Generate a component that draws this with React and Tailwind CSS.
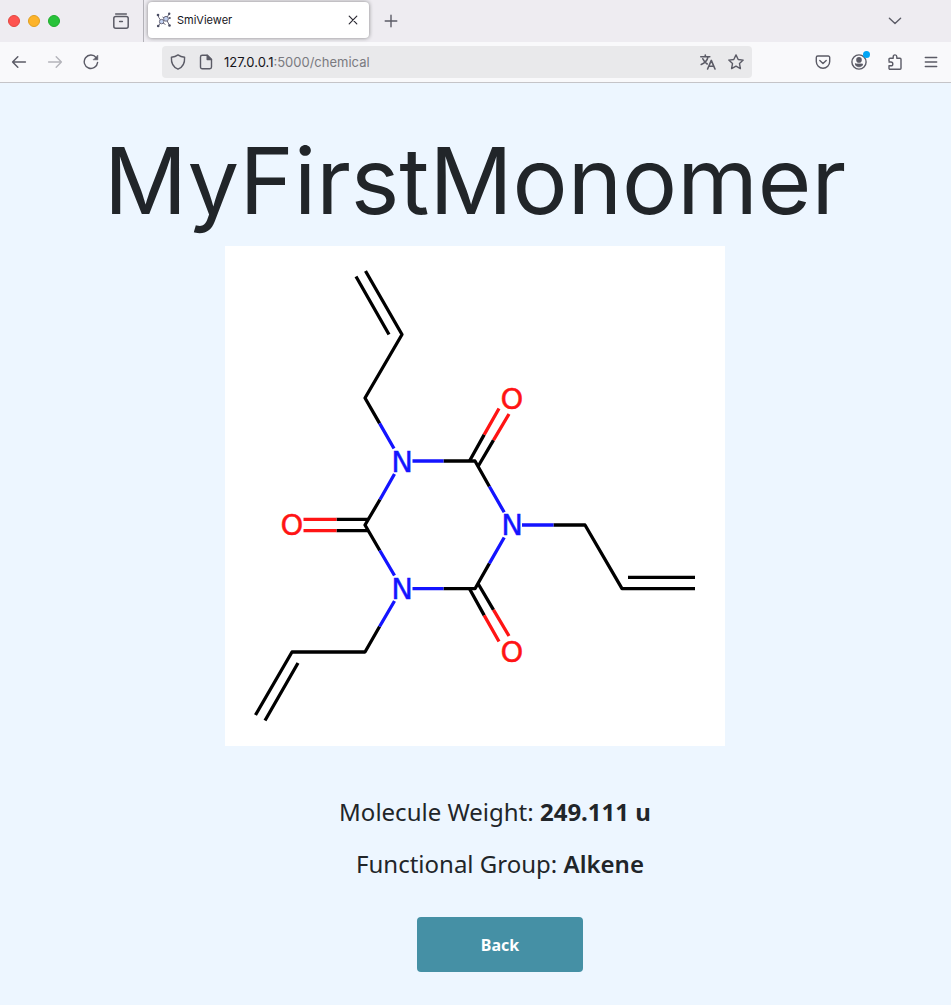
const icon = {
  fill: "none",
  stroke: "#5b5b66",
  strokeWidth: 1.4,
  strokeLinecap: "round",
  strokeLinejoin: "round",
};

function Icon({ children, className = "size-4", ...rest }) {
  return (
    <svg viewBox="0 0 16 16" className={`${className} shrink-0`} aria-hidden="true" {...icon} {...rest}>
      {children}
    </svg>
  );
}

function IconButton({ label, children, className = "" }) {
  return (
    <button type="button" aria-label={label} className={`flex size-4 shrink-0 items-center justify-center ${className}`}>
      {children}
    </button>
  );
}

function Favicon() {
  return (
    <svg viewBox="0 0 16 16" className="size-4 shrink-0" aria-hidden="true">
      <g stroke="#6b6a7c" strokeWidth="1" fill="none">
        <path d="M5.500 9.500 2.800 5.500 2 2.800M5.500 9.500 2.300 14M10.500 6.500 13 2M10.500 7.500 13.500 13.500M7 11 9.500 12.500M6.500 5 8.500 6" />
      </g>
      <g fill="#c3d3f3" stroke="#6b6a7c" strokeWidth="1">
        <circle cx="5.600" cy="9.600" r="2.200" />
        <circle cx="10" cy="6.800" r="2.400" />
      </g>
      <g fill="#4a4d63">
        <circle cx="2" cy="3" r="1.300" />
        <circle cx="13.200" cy="1.800" r="1.200" />
        <circle cx="2.200" cy="14" r="1.300" />
        <circle cx="13.500" cy="13.500" r="1.300" />
        <circle cx="13.800" cy="6" r="1" />
      </g>
    </svg>
  );
}

function TabStrip() {
  return (
    <div className="flex h-[42px] items-stretch bg-[#eeecf1]">
      <div className="flex w-36 shrink-0 items-center border-r border-[#b4b3b9] pl-2">
        <div className="flex gap-2">
          <button type="button" aria-label="Close window" className="size-3 rounded-full border border-[#e2463f] bg-[#fe5350]" />
          <button type="button" aria-label="Minimize window" className="size-3 rounded-full border border-[#e09f1f] bg-[#fdb32a]" />
          <button type="button" aria-label="Zoom window" className="size-3 rounded-full border border-[#1fac2d] bg-[#28c23a]" />
        </div>
        <IconButton label="Recent browsing" className="ml-[53px]">
          <Icon strokeWidth="1.5">
            <path d="M2.700 1h10.600" />
            <rect x=".8" y="3.600" width="14.400" height="11.600" rx="2" />
            <path d="M6.600 8.400h2.800" />
          </Icon>
        </IconButton>
      </div>
      <div className="mt-[2px] ml-1 flex h-9 w-[221px] items-center rounded-[4px] bg-white px-2 shadow-[0_0_4px_rgba(0,0,0,0.45)]">
        <Favicon />
        <span className="ml-[5px] flex-1 pt-px font-['Inter',sans-serif] text-[11px] text-[#15141a]">SmiViewer</span>
        <IconButton label="Close tab">
          <Icon stroke="#2b2a33" strokeWidth="1.200">
            <path d="m4.200 4.200 7.600 7.600M11.800 4.200l-7.600 7.600" />
          </Icon>
        </IconButton>
      </div>
      <div className="flex flex-1 items-center justify-between pr-12 pl-[14px]">
        <IconButton label="New tab">
          <Icon>
            <path d="M8 2.200v11.600M2.200 8h11.600" />
          </Icon>
        </IconButton>
        <IconButton label="List all tabs">
          <Icon>
            <path d="m2.400 5.200 5.600 5.300 5.600-5.300" />
          </Icon>
        </IconButton>
      </div>
    </div>
  );
}

function Toolbar() {
  return (
    <div className="flex h-[41px] items-center border-b border-[#c5c4c8] bg-[#f9f9fb] pr-3 pl-[11px]">
      <div className="flex gap-5">
        <IconButton label="Back">
          <Icon strokeWidth="1.500">
            <path d="M14.400 8H1.600M6.800 2.800 1.600 8l5.200 5.200" />
          </Icon>
        </IconButton>
        <IconButton label="Forward">
          <Icon stroke="#b4b4ba">
            <path d="M1.600 8h12.800M9.200 2.800 14.400 8l-5.200 5.200" />
          </Icon>
        </IconButton>
        <IconButton label="Reload">
          <Icon>
            <path d="M13.200 3.600A6.700 6.700 0 1 0 14.600 8.400" />
            <path d="M14.800 1.400v4.400h-4.400z" fill="#5b5b66" strokeWidth=".6" />
          </Icon>
        </IconButton>
      </div>
      <div className="ml-[63px] flex h-8 flex-1 items-center rounded-[4px] bg-[#e9e9eb] px-2">
        <IconButton label="Tracking protection">
          <Icon>
            <path d="M8 .9c2 1.500 4.200 2.200 6.600 2.400C14.900 9 12.500 13.500 8 15.200 3.500 13.500 1.100 9 1.400 3.300 3.800 3.100 6 2.400 8 .9z" />
          </Icon>
        </IconButton>
        <IconButton label="Site information" className="ml-3">
          <Icon>
            <path d="M9.200 1.300H4.200a1.700 1.700 0 0 0-1.700 1.700v10a1.700 1.700 0 0 0 1.700 1.700h7.600a1.700 1.700 0 0 0 1.700-1.700V5.600z" />
            <path d="M9.200 1.300v4.300h4.300z" fill="#5b5b66" />
          </Icon>
        </IconButton>
        <div className="relative ml-[10px] min-w-0 flex-1 font-['Inter',sans-serif] text-[13px] leading-5">
          <input
            aria-label="Address"
            readOnly
            defaultValue="127.0.0.1:5000/chemical"
            className="block w-full bg-transparent text-transparent outline-none"
          />
          <div aria-hidden="true" className="pointer-events-none absolute inset-0 text-[#7a7a80]">
            <span className="text-[#15141a]">127.0.0.1</span>:5000/chemical
          </div>
        </div>
        <IconButton label="Translate page">
          <Icon strokeWidth="1.600">
            <path d="M.8 2.800h9M5.300 1v1.800M8 2.800C7.400 6 5 8.800 1.200 10.400M2.800 4.800c1 2.400 2.600 4 4.400 5.200" />
            <path d="m7.600 15 3.700-8.600L15 15M9 12.200h4.600" />
          </Icon>
        </IconButton>
        <IconButton label="Bookmark this page" className="ml-3">
          <Icon>
            <path d="m8 .9 2.200 4.600 5 .6-3.700 3.500.9 5L8 12.200l-4.400 2.400.9-5L.8 6.100l5-.6z" />
          </Icon>
        </IconButton>
      </div>
      <div className="ml-[63px] flex gap-5">
        <IconButton label="Save to Pocket">
          <Icon>
            <path d="M2.800 2h10.400a1.500 1.500 0 0 1 1.500 1.500V7.500a6.700 6.700 0 0 1-13.400 0V3.500A1.500 1.500 0 0 1 2.800 2z" />
            <path d="m4.800 6.400 3.200 3 3.200-3" />
          </Icon>
        </IconButton>
        <IconButton label="Account" className="relative">
          <Icon>
            <circle cx="8" cy="8" r="7.100" />
            <circle cx="8" cy="5.900" r="2.100" fill="#5b5b66" />
            <path d="M4.400 10h7.200c0 1.800-1.500 2.800-3.600 2.800S4.400 11.800 4.400 10z" fill="#5b5b66" strokeWidth=".8" />
          </Icon>
          <span className="absolute -top-[3px] -right-[3px] size-[7px] rounded-full bg-[#00a5f5]" />
        </IconButton>
        <IconButton label="Extensions">
          <Icon>
            <path d="M2 7V5.200a1 1 0 0 1 1-1h3.200V2.700a1.800 1.800 0 0 1 3.600 0v1.500H13a1 1 0 0 1 1 1v9a1 1 0 0 1-1 1H3a1 1 0 0 1-1-1v-2.400h1.900a1.900 1.900 0 0 0 0-3.800H2" />
          </Icon>
        </IconButton>
        <IconButton label="Open application menu">
          <Icon>
            <path d="M2.300 3.500h11.400M2.300 8h11.400M2.300 12.500h11.400" />
          </Icon>
        </IconButton>
      </div>
    </div>
  );
}

function Molecule() {
  return (
    <svg viewBox="0 0 500 500" role="img" aria-label="Structure of MyFirstMonomer" className="w-[500px] max-w-full bg-white">
      <g fill="none" strokeWidth="3.300" strokeLinejoin="round">
        <g stroke="#000">
          <path d="M140.500 25 177 88.500 140 152l14.600 25.400M131 30.500l33 58" />
          <path d="M218.500 215H250l14.400 25.500M218.500 342.700H250l14.400-25.300M155 253.500 140 279l14.800 25.500" />
          <path d="M244.500 215 259.200 188.600M253 220.500 268.500 194.200M244.500 342.700 259.200 369.400M253 337.500 268.500 363.800" />
          <path d="M111.500 273.400H143M111.500 284.700H143" />
          <path d="M328.500 279H360l37 63.700H470M403 331.400H470" />
          <path d="M154.600 380.500 140 406H67L30.500 469M73 417 40 474.500" />
        </g>
        <g stroke="#1414ff">
          <path d="M154.600 177.400 169 202.500M169.500 228 155 253.500M154.800 304.500 169.500 329.500M169.500 355 154.600 380.500" />
          <path d="M187.500 215h31M187.500 342.700h31M264.400 240.500 279.200 266.300M264.400 317.400 279.200 291.500M297 279h31.500" />
        </g>
        <g stroke="#ff1414">
          <path d="M259.200 188.600 274 162.500M268.500 194.200 284 168M259.200 369.400 274 395.500M268.500 363.800 284 390" />
          <path d="M78.500 273.400h33M78.500 284.700h33" />
        </g>
      </g>
      <g className="font-['DejaVu_Sans',sans-serif] text-[29px]" textAnchor="middle">
        <g fill="#1414ff" stroke="#1414ff" strokeWidth=".4">
          <text x="177" y="226">N</text>
          <text x="177" y="353">N</text>
          <text x="287" y="289">N</text>
        </g>
        <g fill="#ff1414" stroke="#ff1414" strokeWidth=".4">
          <text x="287" y="163">O</text>
          <text x="287" y="416">O</text>
          <text x="67" y="289">O</text>
        </g>
      </g>
    </svg>
  );
}

export default function App() {
  return (
    <div className="flex min-h-screen flex-col bg-[#edf6ff]">
      <header>
        <TabStrip />
        <Toolbar />
      </header>
      <main className="flex flex-col items-center pt-11 pr-px pb-8 font-['Noto_Sans',sans-serif] text-[#212529]">
        <h1 className="font-['Inter',sans-serif] text-[92px] leading-[108px]">MyFirstMonomer</h1>
        <div className="mt-[11px]">
          <Molecule />
        </div>
        <p className="mt-12 pl-10 text-2xl leading-9">
          Molecule Weight: <strong className="font-bold">249.111 u</strong>
        </p>
        <p className="mt-4 pl-[50px] text-2xl leading-9">
          Functional Group: <strong className="font-semibold">Alkene</strong>
        </p>
        <div className="mt-[35px] pl-[50px]">
          <button type="button" className="h-[55px] w-[166px] rounded-[4px] bg-[#4590a5] text-base font-bold text-white">
            Back
          </button>
        </div>
      </main>
    </div>
  );
}
